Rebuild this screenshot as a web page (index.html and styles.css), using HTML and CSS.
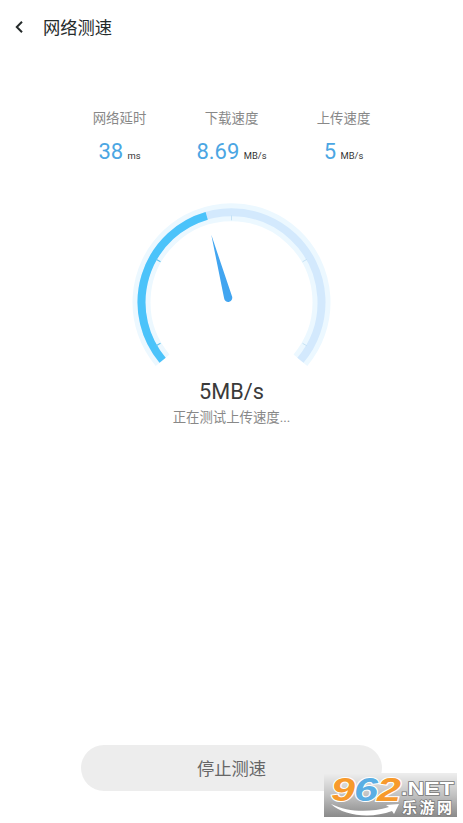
FILE: index.html
```html
<!DOCTYPE html>
<html lang="zh-CN">
<head>
    <meta charset="UTF-8">
    <meta name="viewport" content="width=device-width, initial-scale=1.0">
    <title>网络测速</title>
    <link rel="stylesheet" href="styles.css">
</head>
<body>
    <!-- Header -->
    <header class="header">
        <svg class="back-icon" viewBox="0 0 10 14">
            <path d="M8 1.8 L2.8 7 L8 12.2"/>
        </svg>
        <h1>网络测速</h1>
    </header>

    <!-- Results -->
    <div class="stats">
        <div class="stat">
            <div class="label">网络延时</div>
            <div class="value">38 <span class="unit">ms</span></div>
        </div>
        <div class="stat">
            <div class="label">下载速度</div>
            <div class="value">8.69 <span class="unit">MB/s</span></div>
        </div>
        <div class="stat">
            <div class="label">上传速度</div>
            <div class="value">5 <span class="unit">MB/s</span></div>
        </div>
    </div>

    <!-- Gauge -->
    <svg class="gauge" viewBox="0.5 -0.3 200 166">
        <path class="halo" d="M31.1 157.9 A90 90 0 1 1 168.9 157.9"/>
        <path class="track" d="M31.1 157.9 A90 90 0 1 1 168.9 157.9"/>
        <path class="progress" d="M31.1 157.9 A90 90 0 0 1 75.2 13.5"/>
        <path class="tick done" d="M24.6 57 L29 59.5 M24.6 143.5 L29 141"/>
        <path class="tick" d="M100 13 V18 M175.4 57 L171 59.5 M175.4 143.5 L171 141"/>
        <path class="needle" d="M79.8 32.5 L100.4 93.8 A4.1 4.1 0 1 1 92.6 96 Z"/>
    </svg>
    <div class="speed">5MB/s</div>
    <div class="status">正在测试上传速度...</div>

    <button class="stop-button">停止测速</button>

    <!-- Site badge -->
    <svg class="badge" viewBox="0 0 133 44">
        <defs>
            <linearGradient id="badgeBg" x1="0" y1="0" x2="0" y2="1">
                <stop offset="0" stop-color="#eeeeee"/>
                <stop offset="0.5" stop-color="#c2c2c2"/>
                <stop offset="1" stop-color="#8a8a8a"/>
            </linearGradient>
        </defs>
        <rect width="133" height="44" fill="url(#badgeBg)"/>
        <path class="swoosh" d="M7 31 C24 39 45 40 65 34 L62 32 L75 31 L70 41 L68 38 C47 46 20 43 7 31 Z"/>
        <g class="digits">
            <text x="7" y="27.5" textLength="24" lengthAdjust="spacingAndGlyphs" fill="#f79a2c">9</text>
            <text x="30" y="27.5" textLength="24" lengthAdjust="spacingAndGlyphs" fill="#5aaee3">6</text>
            <text x="53" y="27.5" textLength="24" lengthAdjust="spacingAndGlyphs" fill="#f79a2c">2</text>
        </g>
        <text class="domain" x="77" y="21.5" textLength="53" lengthAdjust="spacingAndGlyphs">.NET</text>
        <text class="site" x="78" y="39.5" textLength="50">乐游网</text>
    </svg>
</body>
</html>
```

FILE: styles.css
```css
* {
    box-sizing: border-box;
}
body {
    margin: 0;
    height: 823px;
    background-color: #fff;
    font-family: Roboto, "Noto Sans CJK SC", sans-serif;
    display: flex;
    flex-direction: column;
    align-items: center;
    overflow: hidden;
}
.header {
    width: 100%;
    height: 54px;
    padding-left: 14px;
    display: flex;
    align-items: center;
    gap: 19px;
}
.header h1 {
    margin: 0;
    padding-bottom: 2px;
    font-size: 17.3px;
    font-weight: 400;
    color: #252b2b;
}
.back-icon {
    width: 10px;
    height: 14px;
    fill: none;
    stroke: #252b2b;
    stroke-width: 2;
}
.stats {
    display: flex;
    width: 336px;
    margin-top: 55px;
}
.stat {
    flex: 1;
    text-align: center;
}
.label {
    font-size: 13.4px;
    line-height: 20px;
    color: #888;
}
.value {
    margin-top: 9px;
    font-size: 22px;
    line-height: 28px;
    color: #4ba6e3;
    white-space: nowrap;
}
.unit {
    margin-left: -1px;
    font-size: 9.4px;
    color: #333;
}
.gauge {
    width: 200px;
    height: 166px;
    margin-top: 32px;
    fill: none;
    flex-shrink: 0;
}
.halo {
    stroke: #ecf8ff;
    stroke-width: 18;
}
.track {
    stroke: #d3e9fd;
    stroke-width: 8;
}
.progress {
    stroke: #4bc3fa;
    stroke-width: 8;
}
.tick {
    stroke: #c5e2f5;
    stroke-width: 1;
}
.tick.done {
    stroke: #66c4ee;
    stroke-width: 1.3;
}
.needle {
    fill: #42a5f0;
}
.speed {
    margin-top: 10px;
    font-size: 21.7px;
    line-height: 28px;
    color: #3a3a3a;
}
.status {
    margin-top: 2px;
    font-size: 13.4px;
    line-height: 20px;
    color: #888;
}
.stop-button {
    width: 301px;
    height: 46px;
    margin-top: auto;
    margin-bottom: 32px;
    padding: 0 0 2px;
    border: none;
    border-radius: 23px;
    background-color: #ededed;
    font-family: inherit;
    font-size: 17.3px;
    color: #666;
}
/* Floats over the bottom right corner */
.badge {
    position: absolute;
    right: 6px;
    bottom: 6px;
    width: 133px;
    height: 44px;
    overflow: visible;
}
.digits {
    font-family: "Liberation Sans", sans-serif;
    font-size: 34px;
    font-weight: 700;
    font-style: italic;
    stroke: #fff;
    stroke-width: 2;
    paint-order: stroke;
}
.domain, .site {
    fill: #fff;
    stroke: #777;
    stroke-width: 1.4;
    paint-order: stroke;
    font-weight: 700;
}
.domain {
    font-family: "Liberation Sans", sans-serif;
    font-size: 18px;
}
.site {
    font-family: "Noto Sans CJK SC", sans-serif;
    font-size: 15px;
}
.swoosh {
    fill: #fff;
}
```
